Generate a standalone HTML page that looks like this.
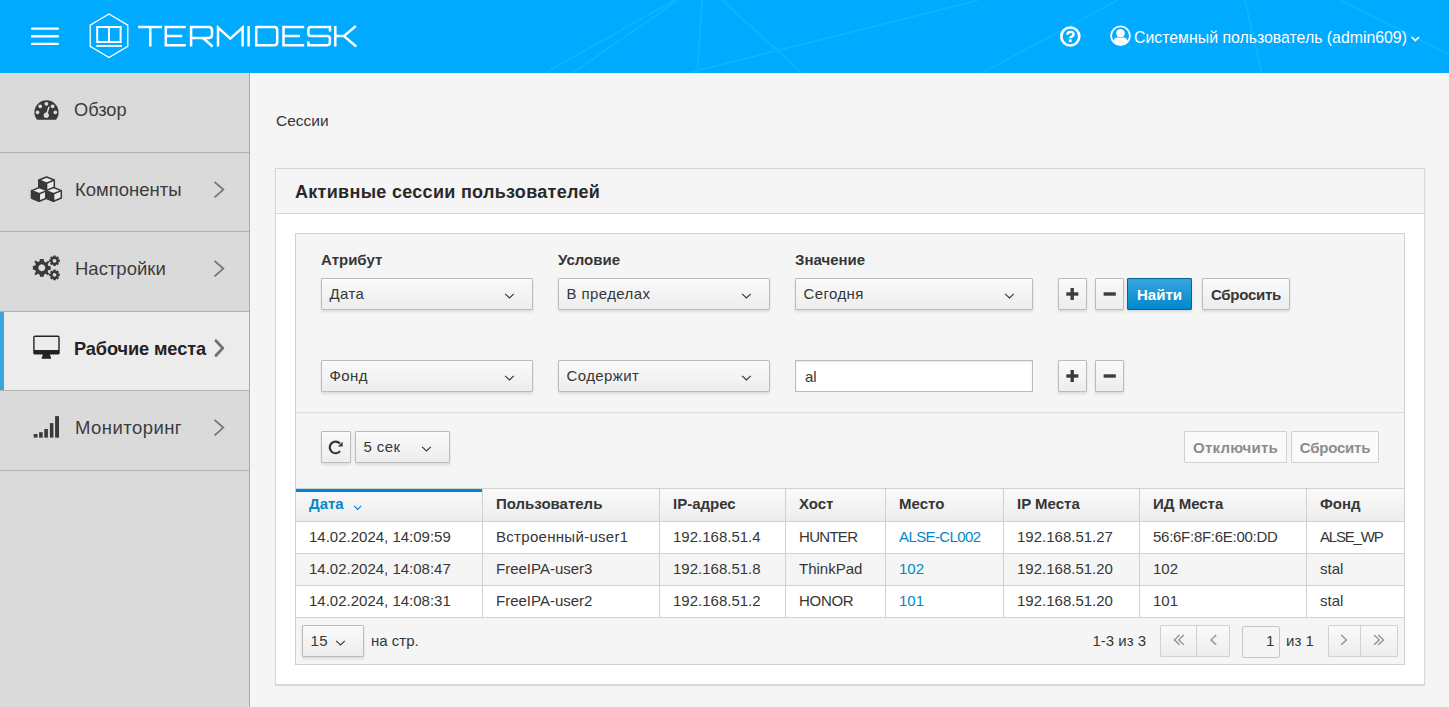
<!DOCTYPE html>
<html><head><meta charset="utf-8">
<style>
*{box-sizing:border-box;margin:0;padding:0}
html,body{width:1449px;height:707px;overflow:hidden;background:#f5f5f5;font-family:"Liberation Sans",sans-serif;color:#363636}
.a{position:absolute}
.t{position:absolute;white-space:nowrap;line-height:1}
#hdr{left:0;top:0;width:1449px;height:73px;background:#00aaff;overflow:hidden}
#side{left:0;top:73px;width:250px;height:634px;background:#dadada;border-right:1px solid #a9a9a9}
.sep{position:absolute;left:0;width:249px;height:1px;background:#b2b2b2}
.chev{position:absolute;left:213px;width:12px;height:18px}
.card{left:275px;top:168px;width:1150px;height:517px;border:1px solid #d6d6d6;background:#fff;box-shadow:0 1px 1px rgba(0,0,0,.12)}
.cardh{left:0;top:0;width:1148px;height:45px;background:#f5f5f5;border-bottom:1px solid #d6d6d6}
.panel{left:295px;top:233px;width:1110px;height:432px;background:#f5f5f5;border:1px solid #d1d1d1}
.lbl{font-weight:bold;font-size:15px;color:#363636}
.sel{position:absolute;height:32px;border:1px solid #bbb;border-radius:1px;background:linear-gradient(#fafafa,#ededed);box-shadow:0 2px 3px rgba(3,3,3,.1)}
.sel .v{position:absolute;left:7.5px;top:7px;font-size:15px;letter-spacing:.4px;line-height:1;white-space:nowrap;color:#363636}
.sel svg{position:absolute;top:14px}
.btn{position:absolute;height:32px;border:1px solid #bbb;border-radius:1px;background:linear-gradient(#fafafa,#ededed);box-shadow:0 2px 3px rgba(3,3,3,.1);font-size:15px;line-height:1;color:#363636;text-align:center;white-space:nowrap}
.inp{position:absolute;height:32px;border:1px solid #bbb;background:#fff;box-shadow:inset 0 1px 2px rgba(3,3,3,.1)}
table{position:absolute;border-collapse:collapse;table-layout:fixed;font-size:15px}
td,th{border:1px solid #d1d1d1;height:32px;padding:0 0 0 13px;text-align:left;white-space:nowrap;overflow:hidden;line-height:1}
th{font-weight:bold;background:linear-gradient(#fafafa,#ededed)}
tr.e td{background:#f5f5f5}
tr.o td{background:#fff}
.lnk{color:#0088ce}
</style></head><body>
<!-- HEADER -->
<div id="hdr" class="a">
<svg class="a" style="left:0;top:0" width="1449" height="73">
 <g stroke="#0ab6ff" stroke-width="1.8" fill="none">
  <line x1="545" y1="73" x2="675" y2="0"/>
  <line x1="572.6" y1="73" x2="678" y2="0"/>
  <line x1="702.3" y1="0" x2="697.3" y2="73"/>
  <line x1="722" y1="0" x2="802" y2="73"/>
  <line x1="688" y1="73" x2="979" y2="0"/>
  <line x1="982" y1="73" x2="1118" y2="0"/>
  <line x1="1245" y1="0" x2="1261.6" y2="73"/>
  <line x1="1340" y1="0" x2="1449" y2="54.5"/>
 </g>
 <g fill="#fff">
  <rect x="31" y="27.5" width="28" height="2.2" rx="1"/>
  <rect x="31" y="35" width="28" height="2.6" rx="1.2"/>
  <rect x="31" y="42.8" width="28" height="2.2" rx="1"/>
 </g>
 <g fill="none" stroke="#fff">
  <path d="M109 14 L127.8 25.2 L127.8 46.4 L109 57.6 L90.2 46.4 L90.2 25.2 Z" stroke-width="1.3"/>
  <rect x="97.2" y="27" width="23.4" height="15" stroke-width="2"/>
  <line x1="109" y1="27" x2="109" y2="42" stroke-width="2"/>
  <line x1="96.2" y1="45.9" x2="121.8" y2="45.9" stroke-width="1.9"/>
 </g>
 <g fill="none" stroke="#fff" stroke-width="2.5" stroke-linecap="butt" stroke-linejoin="miter">
  <path d="M138.2 27 H162 M150.3 27 V46.5"/>
  <path d="M185.8 27 H165.8 V45.2 H185.8 M165.8 36.1 H182.2"/>
  <path d="M191.1 46.5 V27 H208.5 Q212 27 212 30.5 V34.5 Q212 38 208.5 38 H191.1 M203 38 L212.6 46.5"/>
  <path d="M218 46.5 V27.6 L230.3 38.6 L242.6 27.6 V46.5"/>
  <path d="M248.6 26 V46.5"/>
  <path d="M256.2 27 H274.3 Q277.2 27 277.2 30 V42.2 Q277.2 45.2 274.3 45.2 H256.2 V26"/>
  <path d="M304.2 27 H283.5 V45.2 H304.2 M283.5 36.1 H300"/>
  <path d="M330 31.5 V27 H311 Q308.4 27 308.4 29.6 V33.5 Q308.4 36.1 311 36.1 H327.3 Q329.9 36.1 329.9 38.7 V42.6 Q329.9 45.2 327.3 45.2 H308.4 V41.5"/>
  <path d="M335.3 26 V46.5 M336 36.1 H344 L355.8 26 M344 36.1 L356.2 46.5"/>
 </g>
 <g>
  <circle cx="1070.3" cy="36.5" r="9" fill="none" stroke="#fff" stroke-width="2.7"/>
  <path d="M1067.4 34.8 Q1067.4 32.1 1070.4 32.1 Q1073.6 32.1 1073.6 34.5 Q1073.6 35.9 1071.9 36.5 Q1070.3 37.1 1070.3 38.3" fill="none" stroke="#fff" stroke-width="2.5"/>
  <rect x="1068.9" y="39.4" width="2.8" height="2.7" fill="#fff"/>
  <circle cx="1120.5" cy="35.8" r="9.4" fill="none" stroke="#fff" stroke-width="1.8"/>
  <circle cx="1120.5" cy="33.2" r="4.3" fill="#fff"/>
  <path d="M1113.2 41.8 Q1114 37.6 1117.5 37.3 Q1120.5 38.6 1123.5 37.3 Q1127 37.6 1127.8 41.8 Q1125 45.2 1120.5 45.2 Q1116 45.2 1113.2 41.8 Z" fill="#fff"/>
  <path d="M1411.6 37 L1415.3 40.6 L1419 37" fill="none" stroke="#fff" stroke-width="1.6"/>
 </g>
</svg>
<div class="t" style="left:1134px;top:30px;font-size:15.85px;color:#fff">Системный пользователь (admin609)</div>
</div>
<!-- SIDEBAR -->
<div id="side" class="a"></div>
<div class="a" style="left:0;top:312px;width:249px;height:78px;background:#ececec"></div>
<div class="a" style="left:0;top:312px;width:4px;height:78px;background:#39a5dc"></div>
<div class="sep" style="top:152px"></div>
<div class="sep" style="top:231px"></div>
<div class="sep" style="top:311px"></div>
<div class="sep" style="top:390px"></div>
<div class="sep" style="top:470px"></div>
<svg class="a" style="left:0;top:73px" width="249" height="400">
 <g transform="translate(0,-73)">
 <!-- gauge -->
 <path fill="#393939" fill-rule="evenodd" d="M37 119.8 A12.1 12.1 0 1 1 56 119.8 Z
   M46.4 101.9 a1.9 1.9 0 1 0 0.01 0 Z M40.2 104.4 a1.9 1.9 0 1 0 0.01 0 Z M52.6 104.4 a1.9 1.9 0 1 0 0.01 0 Z
   M37.5 110.5 a1.9 1.9 0 1 0 0.01 0 Z M55.3 110.5 a1.9 1.9 0 1 0 0.01 0 Z
   M46.3 112.6 a2.7 2.7 0 1 0 0.01 0 Z"/>
 <path d="M46.6 114.5 L48.9 107.2" stroke="#dadada" stroke-width="1.5" stroke-linecap="round"/>
 <!-- cubes -->
 <g stroke="#393939" stroke-width="1.5" stroke-linejoin="round">
  <path d="M46.6 177 L54.3 180 L54.3 188 L46.6 191 L38.9 188 L38.9 180 Z" fill="#ebebeb"/>
  <path d="M38.9 180 L46.6 183.3 L46.6 191 L38.9 188 Z" fill="#393939"/>
  <path d="M46.6 183.3 L54.3 180" fill="none"/>
  <path d="M39.3 187.5 L47 190.6 L47 198 L39.3 201.2 L31.6 198 L31.6 190.6 Z" fill="#ebebeb"/>
  <path d="M31.6 190.6 L39.3 193.8 L39.3 201.2 L31.6 198 Z" fill="#393939"/>
  <path d="M39.3 193.8 L47 190.6" fill="none"/>
  <path d="M53.6 187.5 L61.3 190.6 L61.3 198 L53.6 201.2 L45.9 198 L45.9 190.6 Z" fill="#ebebeb"/>
  <path d="M45.9 190.6 L53.6 193.8 L53.6 201.2 L45.9 198 Z" fill="#393939"/>
  <path d="M53.6 193.8 L61.3 190.6" fill="none"/>
 </g>
 <!-- cogs -->
 <g fill="#393939">
  <g transform="translate(41.8,267.8)">
   <path fill-rule="evenodd" d="M-1.9 -8.9 H1.9 L2.3 -6.2 L4.1 -5.4 L6.3 -7 L7.5 -5.8 L5.9 -3.6 L6.6 -1.9 L8.9 -1.6 V1.9 L6.6 2.2 L5.9 3.9 L7.4 6.1 L6.1 7.4 L3.9 5.9 L2.2 6.6 L1.9 8.9 H-1.9 L-2.2 6.6 L-3.9 5.9 L-6.1 7.4 L-7.4 6.1 L-5.9 3.9 L-6.6 2.2 L-8.9 1.9 V-1.9 L-6.6 -2.2 L-5.9 -3.9 L-7.4 -6.1 L-6.1 -7.4 L-3.9 -5.9 L-2.2 -6.6 Z M0 -3.5 A3.5 3.5 0 1 0 0.01 -3.5 Z"/>
  </g>
  <g transform="translate(54.5,260.8)">
   <path fill-rule="evenodd" d="M-1.1 -5.3 H1.1 L1.4 -3.6 L2.9 -4.6 L4.5 -3 L3.5 -1.6 L5.3 -1.2 V1.2 L3.5 1.5 L4.5 3 L3 4.5 L1.5 3.5 L1.2 5.3 H-1.2 L-1.5 3.5 L-3 4.5 L-4.5 3 L-3.5 1.5 L-5.3 1.2 V-1.2 L-3.5 -1.5 L-4.5 -3 L-3 -4.5 L-1.5 -3.5 Z M0 -1.9 A1.9 1.9 0 1 0 0.01 -1.9 Z"/>
  </g>
  <g transform="translate(54.5,274.9)">
   <path fill-rule="evenodd" d="M-1.1 -5.3 H1.1 L1.4 -3.6 L2.9 -4.6 L4.5 -3 L3.5 -1.6 L5.3 -1.2 V1.2 L3.5 1.5 L4.5 3 L3 4.5 L1.5 3.5 L1.2 5.3 H-1.2 L-1.5 3.5 L-3 4.5 L-4.5 3 L-3.5 1.5 L-5.3 1.2 V-1.2 L-3.5 -1.5 L-4.5 -3 L-3 -4.5 L-1.5 -3.5 Z M0 -1.9 A1.9 1.9 0 1 0 0.01 -1.9 Z"/>
  </g>
 </g>
 <!-- desktop -->
 <g fill="#222">
  <path fill-rule="evenodd" d="M35 335.6 H58 Q59.7 335.6 59.7 337.3 V352.9 Q59.7 354.6 58 354.6 H35 Q33.2 354.6 33.2 352.9 V337.3 Q33.2 335.6 35 335.6 Z M34.6 337 V350.1 H58.3 V337 Z"/>
  <rect x="42.6" y="354" width="7.6" height="3" />
  <rect x="41.8" y="356.6" width="9.2" height="2.2" rx=".6"/>
 </g>
 <!-- signal -->
 <g fill="#393939">
  <rect x="33.7" y="434" width="3.8" height="3.6"/>
  <rect x="39.1" y="432.2" width="3.6" height="5.4"/>
  <rect x="44.3" y="429" width="3.6" height="8.6"/>
  <rect x="49.9" y="423.1" width="3.5" height="14.5"/>
  <rect x="55.1" y="416.1" width="3.9" height="21.5"/>
 </g>
 <!-- chevrons -->
 <g fill="none" stroke="#72767b" stroke-width="1.8">
  <path d="M214.5 181.8 L223.3 189.6 L214.5 197.4"/>
  <path d="M214.5 260.8 L223.3 268.6 L214.5 276.4"/>
  <path d="M214.5 419.8 L223.3 427.6 L214.5 435.4"/>
 </g>
 <path d="M215.9 340.7 L222.8 348.1 L215.9 355.5" fill="none" stroke="#6f7073" stroke-width="2.8" stroke-linecap="round" stroke-linejoin="round"/>
 </g>
</svg>
<div class="t" style="left:74px;top:101px;font-size:18.2px;color:#3c3c3c">Обзор</div>
<div class="t" style="left:75px;top:181px;font-size:18.5px;color:#3c3c3c">Компоненты</div>
<div class="t" style="left:75px;top:260px;font-size:18.5px;color:#3c3c3c">Настройки</div>
<div class="t" style="left:74px;top:340px;font-size:18.2px;font-weight:bold;color:#222;letter-spacing:-.1px">Рабочие места</div>
<div class="t" style="left:75px;top:419px;font-size:18.5px;letter-spacing:.44px;color:#3c3c3c">Мониторинг</div>
<!-- CONTENT -->
<div class="t" style="left:276px;top:113px;font-size:15.5px;color:#363636">Сессии</div>
<div class="a card">
 <div class="a cardh"></div>
</div>
<div class="t" style="left:295px;top:182.6px;font-size:18px;font-weight:bold;color:#292929;letter-spacing:.3px">Активные сессии пользователей</div>
<div class="a panel"></div>
<div class="a" style="left:296px;top:412px;width:1108px;height:1px;background:#dcdcdc"></div>
<!-- filter labels -->
<div class="t lbl" style="left:321px;top:252px">Атрибут</div>
<div class="t lbl" style="left:558px;top:252px">Условие</div>
<div class="t lbl" style="left:795px;top:252px">Значение</div>
<!-- selects -->
<div class="sel" style="left:321px;top:278px;width:212px"><div class="v">Дата</div></div>
<div class="sel" style="left:558px;top:278px;width:212px"><div class="v">В пределах</div></div>
<div class="sel" style="left:795px;top:278px;width:238px"><div class="v">Сегодня</div></div>
<div class="btn" style="left:1058px;top:278px;width:29px"></div>
<div class="btn" style="left:1095px;top:278px;width:29px"></div>
<div class="btn" style="left:1127px;top:278px;width:65px;background:linear-gradient(#39a5dc,#0088ce);border-color:#00659c;color:#fff;font-weight:bold;padding-top:8px">Найти</div>
<div class="btn" style="left:1202px;top:278px;width:88px;padding-top:8px;font-weight:bold;letter-spacing:-.25px">Сбросить</div>
<div class="sel" style="left:321px;top:360px;width:212px"><div class="v">Фонд</div></div>
<div class="sel" style="left:558px;top:360px;width:212px"><div class="v">Содержит</div></div>
<div class="inp" style="left:795px;top:360px;width:238px"><div class="t" style="left:9px;top:8px;font-size:15px">al</div></div>
<div class="btn" style="left:1058px;top:360px;width:29px"></div>
<div class="btn" style="left:1095px;top:360px;width:29px"></div>
<!-- toolbar -->
<div class="btn" style="left:321px;top:431px;width:30px"></div>
<div class="sel" style="left:355px;top:431px;width:95px"><div class="v">5 сек</div></div>
<div class="btn" style="left:1184px;top:431px;width:103px;background:#fafafa;border-color:#d1d1d1;box-shadow:none;color:#8b8d8f;padding-top:8px;font-weight:bold;letter-spacing:.2px">Отключить</div>
<div class="btn" style="left:1291px;top:431px;width:88px;background:#fafafa;border-color:#d1d1d1;box-shadow:none;color:#8b8d8f;padding-top:8px;font-weight:bold;letter-spacing:-.2px">Сбросить</div>
<!-- TABLE -->
<div class="a" style="left:296px;top:489px;width:1108px;height:32px;background:linear-gradient(#fafafa,#ededed)"></div>
<div class="a" style="left:296px;top:522px;width:1108px;height:31px;background:#fff"></div>
<div class="a" style="left:296px;top:554px;width:1108px;height:31px;background:#f5f5f5"></div>
<div class="a" style="left:296px;top:586px;width:1108px;height:31px;background:#fff"></div>
<div class="a" style="left:296px;top:488px;width:1108px;height:1px;background:#d1d1d1"></div>
<div class="a" style="left:296px;top:521px;width:1108px;height:1px;background:#d1d1d1"></div>
<div class="a" style="left:296px;top:553px;width:1108px;height:1px;background:#d1d1d1"></div>
<div class="a" style="left:296px;top:585px;width:1108px;height:1px;background:#d1d1d1"></div>
<div class="a" style="left:296px;top:617px;width:1108px;height:1px;background:#d1d1d1"></div>
<div class="a" style="left:296px;top:489px;width:186px;height:3px;background:#0088ce"></div>
<div class="a" style="left:482px;top:489px;width:1px;height:128px;background:#d1d1d1"></div>
<div class="a" style="left:659px;top:489px;width:1px;height:128px;background:#d1d1d1"></div>
<div class="a" style="left:785px;top:489px;width:1px;height:128px;background:#d1d1d1"></div>
<div class="a" style="left:885px;top:489px;width:1px;height:128px;background:#d1d1d1"></div>
<div class="a" style="left:1003px;top:489px;width:1px;height:128px;background:#d1d1d1"></div>
<div class="a" style="left:1139px;top:489px;width:1px;height:128px;background:#d1d1d1"></div>
<div class="a" style="left:1306px;top:489px;width:1px;height:128px;background:#d1d1d1"></div>
<div class="t" style="left:309px;top:496.3px;font-size:15px;font-weight:bold;color:#0088ce">Дата</div>
<div class="t" style="left:496px;top:496.3px;font-size:15px;font-weight:bold;color:#363636">Пользователь</div>
<div class="t" style="left:673px;top:496.3px;font-size:15px;font-weight:bold;color:#363636">IP-адрес</div>
<div class="t" style="left:799px;top:496.3px;font-size:15px;font-weight:bold;color:#363636">Хост</div>
<div class="t" style="left:899px;top:496.3px;font-size:15px;font-weight:bold;color:#363636">Место</div>
<div class="t" style="left:1017px;top:496.3px;font-size:15px;font-weight:bold;color:#363636">IP Места</div>
<div class="t" style="left:1153px;top:496.3px;font-size:15px;font-weight:bold;color:#363636">ИД Места</div>
<div class="t" style="left:1320px;top:496.3px;font-size:15px;font-weight:bold;color:#363636">Фонд</div>
<div class="t" style="left:309px;top:528.5px;font-size:15px;color:#363636">14.02.2024, 14:09:59</div>
<div class="t" style="left:496px;top:528.5px;font-size:15px;color:#363636;letter-spacing:.3px">Встроенный-user1</div>
<div class="t" style="left:673px;top:528.5px;font-size:15px;color:#363636">192.168.51.4</div>
<div class="t" style="left:799px;top:528.5px;font-size:15px;color:#363636;letter-spacing:-.7px">HUNTER</div>
<div class="t" style="left:899px;top:528.5px;font-size:15px;color:#0088ce;letter-spacing:-.6px">ALSE-CL002</div>
<div class="t" style="left:1017px;top:528.5px;font-size:15px;color:#363636">192.168.51.27</div>
<div class="t" style="left:1153px;top:528.5px;font-size:15px;color:#363636;letter-spacing:-.27px">56:6F:8F:6E:00:DD</div>
<div class="t" style="left:1320px;top:528.5px;font-size:15px;color:#363636;letter-spacing:-1.2px">ALSE_WP</div>
<div class="t" style="left:309px;top:560.5px;font-size:15px;color:#363636">14.02.2024, 14:08:47</div>
<div class="t" style="left:496px;top:560.5px;font-size:15px;color:#363636">FreeIPA-user3</div>
<div class="t" style="left:673px;top:560.5px;font-size:15px;color:#363636">192.168.51.8</div>
<div class="t" style="left:799px;top:560.5px;font-size:15px;color:#363636">ThinkPad</div>
<div class="t" style="left:899px;top:560.5px;font-size:15px;color:#0088ce">102</div>
<div class="t" style="left:1017px;top:560.5px;font-size:15px;color:#363636">192.168.51.20</div>
<div class="t" style="left:1153px;top:560.5px;font-size:15px;color:#363636">102</div>
<div class="t" style="left:1320px;top:560.5px;font-size:15px;color:#363636">stal</div>
<div class="t" style="left:309px;top:593px;font-size:15px;color:#363636">14.02.2024, 14:08:31</div>
<div class="t" style="left:496px;top:593px;font-size:15px;color:#363636">FreeIPA-user2</div>
<div class="t" style="left:673px;top:593px;font-size:15px;color:#363636">192.168.51.2</div>
<div class="t" style="left:799px;top:593px;font-size:15px;color:#363636;letter-spacing:-.3px">HONOR</div>
<div class="t" style="left:899px;top:593px;font-size:15px;color:#0088ce">101</div>
<div class="t" style="left:1017px;top:593px;font-size:15px;color:#363636">192.168.51.20</div>
<div class="t" style="left:1153px;top:593px;font-size:15px;color:#363636">101</div>
<div class="t" style="left:1320px;top:593px;font-size:15px;color:#363636">stal</div>
<!-- footer -->
<div class="sel" style="left:302px;top:625px;width:62px"><div class="v">15</div></div>
<div class="t" style="left:371px;top:633px;font-size:15px">на стр.</div>
<div class="t" style="left:1092.5px;top:633px;font-size:15px">1-3 из 3</div>
<div class="btn" style="left:1160px;top:625px;width:70px;background:linear-gradient(#fafafa,#ededed);border-color:#d1d1d1;box-shadow:none"></div>
<div class="a" style="left:1196px;top:626px;width:1px;height:30px;background:#d1d1d1"></div>
<div class="inp" style="left:1242px;top:626px;width:38px;border-color:#c6c6c6;background:#f5f5f5;box-shadow:none;border-radius:2px"><div class="t" style="left:23px;top:6px;font-size:15px">1</div></div>
<div class="t" style="left:1286px;top:633px;font-size:15px">из 1</div>
<div class="btn" style="left:1328px;top:625px;width:70px;background:linear-gradient(#fafafa,#ededed);border-color:#d1d1d1;box-shadow:none"></div>
<div class="a" style="left:1360px;top:626px;width:1px;height:30px;background:#d1d1d1"></div>
<!-- icons overlay -->
<svg class="a" style="left:0;top:0" width="1449" height="707">
<path d="M505.1 293.8 L509.5 297.9 L513.8 293.8" fill="none" stroke="#363636" stroke-width="1.1"/>
<path d="M742.1 293.8 L746.4 297.9 L750.8 293.8" fill="none" stroke="#363636" stroke-width="1.1"/>
<path d="M1005.1 293.8 L1009.4 297.9 L1013.8 293.8" fill="none" stroke="#363636" stroke-width="1.1"/>
<path d="M505.1 375.8 L509.5 379.9 L513.8 375.8" fill="none" stroke="#363636" stroke-width="1.1"/>
<path d="M742.1 375.8 L746.4 379.9 L750.8 375.8" fill="none" stroke="#363636" stroke-width="1.1"/>
<path d="M422.1 446.8 L426.5 450.9 L430.8 446.8" fill="none" stroke="#363636" stroke-width="1.1"/>
<path d="M336.1 640.8 L340.5 644.9 L344.8 640.8" fill="none" stroke="#363636" stroke-width="1.1"/>
<path d="M354 505.9 L357.6 509.5 L361.2 505.9" fill="none" stroke="#0088ce" stroke-width="1.1"/>
<g fill="#393d42">
 <rect x="1066.3" y="292.3" width="12" height="3.4"/><rect x="1070.5" y="288" width="3.4" height="12"/>
 <rect x="1103.6" y="292.3" width="12.2" height="3.4"/>
 <rect x="1066.3" y="374.3" width="12" height="3.4"/><rect x="1070.5" y="370" width="3.4" height="12"/>
 <rect x="1103.6" y="374.3" width="12.2" height="3.4"/>
</g>
<path d="M340.1 451.1 A5.8 5.8 0 1 1 339.9 443.6" fill="none" stroke="#363636" stroke-width="2.2"/>
<path d="M337.9 446.6 L342.6 446.6 L342.6 441.8 Z" fill="#363636"/>
<g fill="none" stroke="#8b8d8f" stroke-width="1.3">
 <path d="M1179.6 635 L1174.4 639.9 L1179.6 644.8 M1183.9 635 L1178.7 639.9 L1183.9 644.8"/>
 <path d="M1216.2 635 L1211 639.9 L1216.2 644.8"/>
 <path d="M1341.2 635 L1346.4 639.9 L1341.2 644.8"/>
 <path d="M1374 635 L1379.2 639.9 L1374 644.8 M1378.3 635 L1383.5 639.9 L1378.3 644.8"/>
</g>
</svg>
</body></html>
